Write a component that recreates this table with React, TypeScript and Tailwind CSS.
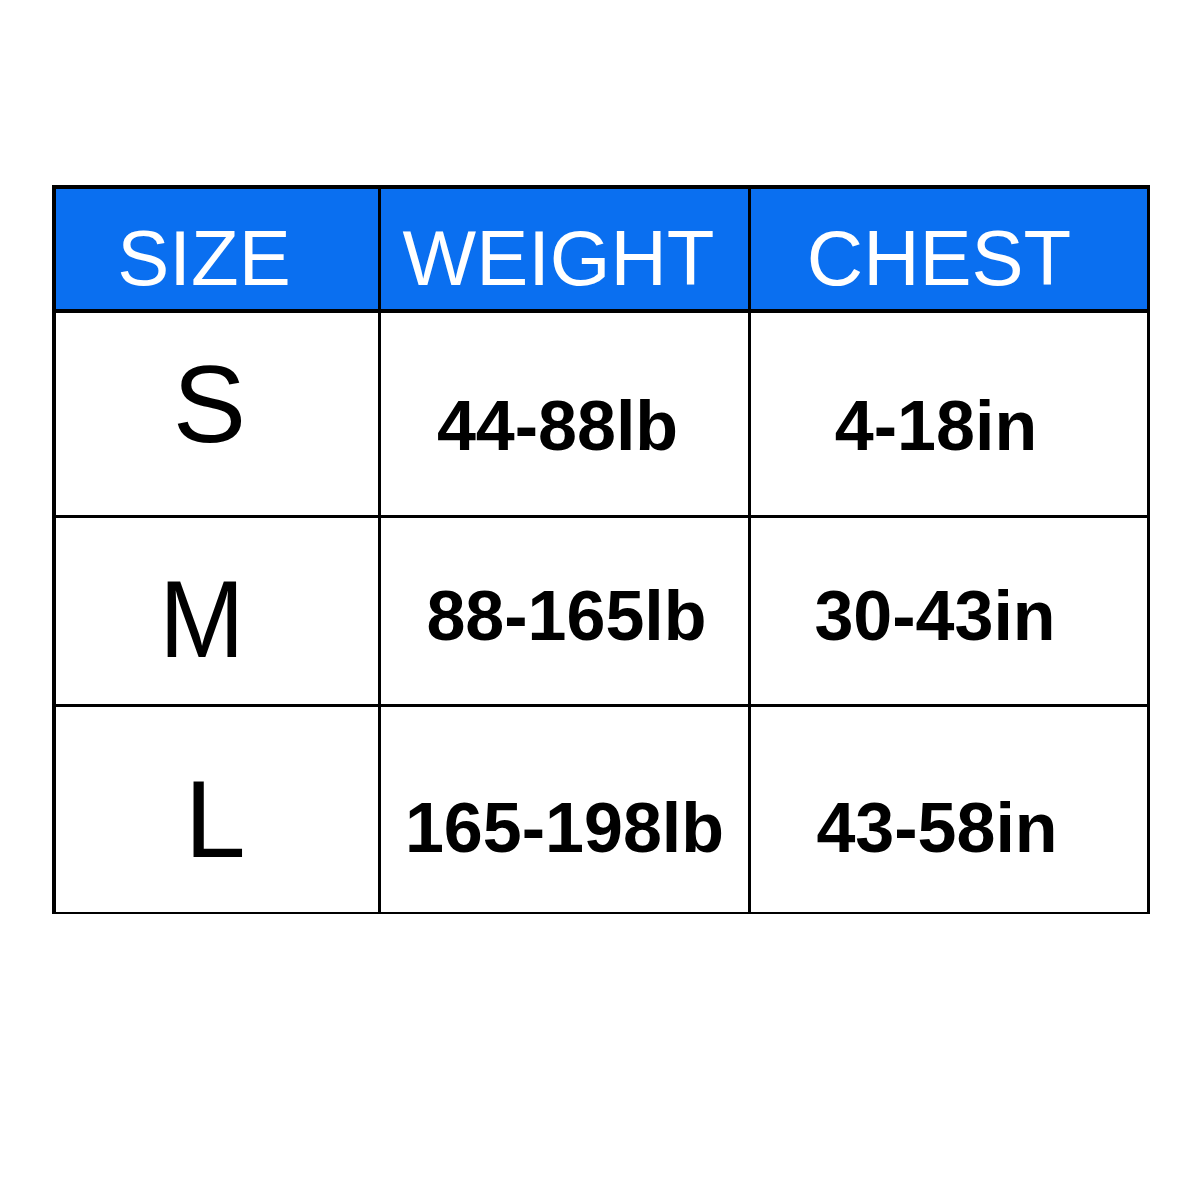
const headers = [
  { label: 'SIZE', cls: 'pr-[26px]' },
  { label: 'WEIGHT', cls: 'pr-[12px]' },
  { label: 'CHEST', cls: 'pr-[20px]' },
];

const rows = [
  {
    height: 'h-[202px]',
    size: { label: 'S', cls: 'pt-[36px] pr-[15px]' },
    weight: { label: '44-88lb', cls: 'pt-[78px] pr-[14px]' },
    chest: { label: '4-18in', cls: 'pt-[78px] pr-[26px]' },
  },
  {
    height: 'h-[186px]',
    size: { label: 'M', cls: 'pt-[46px] pr-[30px]' },
    weight: { label: '88-165lb', cls: 'pt-[63px] pl-[4px]' },
    chest: { label: '30-43in', cls: 'pt-[63px] pr-[28px]' },
  },
  {
    height: 'h-[205px]',
    size: { label: 'L', cls: 'pt-[57px] pr-[4px]' },
    weight: { label: '165-198lb', cls: 'pt-[86px]' },
    chest: { label: '43-58in', cls: 'pt-[86px] pr-[24px]' },
  },
];

export default function App() {
  return (
    <div className="w-[1200px] h-[1200px] bg-white pt-[185px] pl-[52px] font-['Liberation_Sans',Arial,sans-serif]">
      <div className="w-[1098px] border-l-[4px] border-r-[3px] border-t-[4px] border-b-[2px] border-black bg-black">
        <div className="grid grid-cols-[322px_367px_396px] gap-x-[3px] gap-y-[3px]">
          {headers.map(h => (
            <div key={h.label} className={`h-[121px] bg-[#0a6ff0] border-b-[1px] border-black flex justify-center items-start pt-[30px] ${h.cls}`}>
              <span className="text-white text-[78px] leading-[78px]">{h.label}</span>
            </div>
          ))}
          {rows.map(r => (
            <div key={r.size.label} className="contents">
              <div className={`${r.height} bg-white flex justify-center items-start ${r.size.cls}`}>
                <span className={`text-black text-[110px] leading-[110px] ${r.size.label === 'M' ? 'scale-x-[0.93] inline-block' : ''}`}>
                  {r.size.label}
                </span>
              </div>
              <div className={`${r.height} bg-white flex justify-center items-start ${r.weight.cls}`}>
                <span className="text-black font-bold text-[70px] leading-[70px]">{r.weight.label}</span>
              </div>
              <div className={`${r.height} bg-white flex justify-center items-start ${r.chest.cls}`}>
                <span className="text-black font-bold text-[70px] leading-[70px]">{r.chest.label}</span>
              </div>
            </div>
          ))}
        </div>
      </div>
    </div>
  );
}
